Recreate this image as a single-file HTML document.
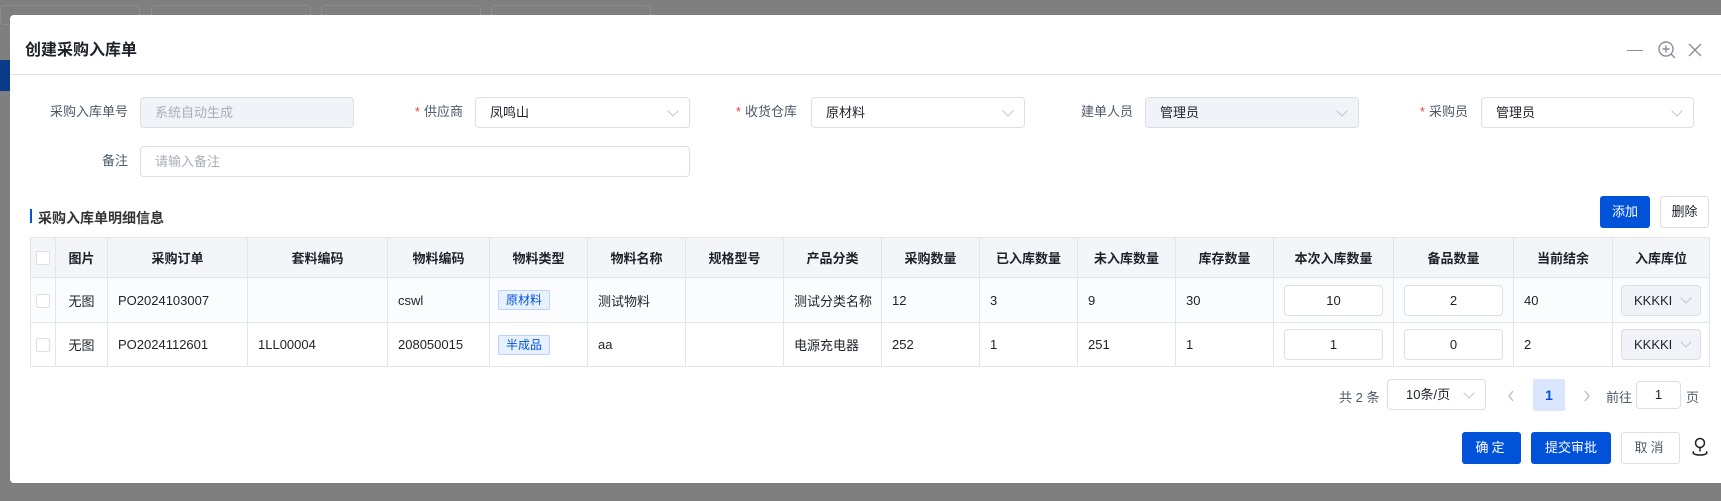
<!DOCTYPE html>
<html><head><meta charset="utf-8"><style>
*{box-sizing:border-box;margin:0;padding:0}
body{width:1721px;height:501px;overflow:hidden;background:#7f7f7f;font-family:"Liberation Sans","Noto Sans CJK SC",sans-serif;position:relative;color:#1d2129}
.a{position:absolute}
.modal{left:10px;top:15px;width:1720px;height:468px;background:#fff;border-radius:4px 0 0 4px}
.lbl{font-size:13px;color:#4e5969;text-align:right;width:120px;line-height:30px}
.req{color:#f53f3f;margin-right:4px}
.inp{height:31px;border:1px solid #dcdfe6;border-radius:4px;font-size:13px;line-height:29px;padding-left:14px;background:#fff;color:#1d2129}
.dis{background:#f2f3f8}
.ph{color:#a9aeb8}
.arr{position:absolute;right:12px;top:9px;width:8px;height:8px;border-right:1px solid #c0c4cc;border-bottom:1px solid #c0c4cc;transform:rotate(45deg)}
table{border-collapse:collapse;table-layout:fixed}
td,th{border:1px solid #e1e5ec;font-size:13px;padding:0 10px;white-space:nowrap;overflow:hidden}
th{height:40px;background:#f3f5f9;font-weight:bold;text-align:center;color:#1d2129}
tr.r1 td{height:45px;background:#fbfcfe}
tr.r2 td{height:44px;background:#fff}
.cb{width:14px;height:14px;border:1px solid #dcdfe6;border-radius:2px;background:#fff;display:inline-block;vertical-align:middle}
.tag{display:inline-block;border:1px solid #bed3fb;background:#e8f1ff;color:#0052d9;font-size:12px;padding:0 7px;line-height:18px;border-radius:2px}
.ci{height:31px;border:1px solid #dcdfe6;border-radius:4px;text-align:center;line-height:29px;background:#fff}
.sel{height:31px;border:1px solid #dcdfe6;border-radius:4px;background:#f2f3f8;line-height:29px;padding-left:12px;position:relative}
.btn{font-size:13px;text-align:center;border-radius:3px}
.pri{background:#0052d9;color:#fff}
.def{border:1px solid #dcdfe6;color:#4e5969;background:#fff}
</style></head><body>
<div class="a" style="left:0;top:5px;width:140px;height:20px;border:1px solid #8c8c8c;border-radius:4px"></div>
<div class="a" style="left:151px;top:5px;width:160px;height:20px;border:1px solid #8c8c8c;border-radius:4px"></div>
<div class="a" style="left:321px;top:5px;width:160px;height:20px;border:1px solid #8c8c8c;border-radius:4px"></div>
<div class="a" style="left:491px;top:5px;width:160px;height:20px;border:1px solid #8c8c8c;border-radius:4px"></div>
<div class="a" style="left:0;top:60px;width:10px;height:31px;background:#0b3a8a"></div>

<div class="a modal"></div>
<div class="a" style="left:25px;top:36px;font-size:16px;font-weight:bold;color:#1d2129">创建采购入库单</div>
<div class="a" style="left:1627px;top:50px;width:16px;height:1px;background:#8a8f99"></div>
<svg class="a" style="left:1657px;top:40px" width="20" height="20" viewBox="0 0 20 20" fill="none" stroke="#8a8f99" stroke-width="1.4"><circle cx="9" cy="9" r="7"/><path d="M9 5.5v7M5.5 9h7M14 14l4 4"/></svg>
<svg class="a" style="left:1688px;top:43px" width="14" height="14" viewBox="0 0 14 14" stroke="#8a8f99" stroke-width="1.4"><path d="M1 1l12 12M13 1L1 13"/></svg>
<div class="a" style="left:10px;top:74px;width:1711px;height:1px;background:#e0e2e7"></div>

<div class="a lbl" style="left:8px;top:97px">采购入库单号</div>
<div class="a inp dis ph" style="left:140px;top:97px;width:214px">系统自动生成</div>
<div class="a lbl" style="left:343px;top:97px"><span class="req">*</span>供应商</div>
<div class="a inp" style="left:475px;top:97px;width:215px">凤鸣山<span class="arr"></span></div>
<div class="a lbl" style="left:677px;top:97px"><span class="req">*</span>收货仓库</div>
<div class="a inp" style="left:811px;top:97px;width:214px">原材料<span class="arr"></span></div>
<div class="a lbl" style="left:1013px;top:97px">建单人员</div>
<div class="a inp dis" style="left:1145px;top:97px;width:214px">管理员<span class="arr"></span></div>
<div class="a lbl" style="left:1348px;top:97px"><span class="req">*</span>采购员</div>
<div class="a inp" style="left:1481px;top:97px;width:213px">管理员<span class="arr"></span></div>
<div class="a lbl" style="left:8px;top:146px">备注</div>
<div class="a inp ph" style="left:140px;top:146px;width:550px">请输入备注</div>

<div class="a" style="left:30px;top:209px;width:2px;height:14px;background:#0052d9"></div>
<div class="a" style="left:38px;top:208px;font-size:14px;font-weight:bold;color:#333">采购入库单明细信息</div>
<div class="a btn pri" style="left:1600px;top:196px;width:50px;height:32px;line-height:32px">添加</div>
<div class="a btn def" style="left:1660px;top:196px;width:49px;height:32px;line-height:30px;color:#1d2129">删除</div>

<table class="a" style="left:30px;top:237px;width:1679px">
<colgroup><col style="width:25px"><col style="width:52px"><col style="width:140px"><col style="width:140px"><col style="width:102px"><col style="width:98px"><col style="width:98px"><col style="width:98px"><col style="width:98px"><col style="width:98px"><col style="width:98px"><col style="width:98px"><col style="width:98px"><col style="width:120px"><col style="width:120px"><col style="width:99px"><col style="width:97px"></colgroup>
<tr><th style="padding:0 5px"><span class="cb"></span></th><th>图片</th><th>采购订单</th><th>套料编码</th><th>物料编码</th><th>物料类型</th><th>物料名称</th><th>规格型号</th><th>产品分类</th><th>采购数量</th><th>已入库数量</th><th>未入库数量</th><th>库存数量</th><th>本次入库数量</th><th>备品数量</th><th>当前结余</th><th>入库库位</th></tr>
<tr class="r1"><td style="padding:0 5px"><span class="cb"></span></td><td style="text-align:center">无图</td><td>PO2024103007</td><td></td><td>cswl</td><td style="padding:0 8px"><span class="tag">原材料</span></td><td>测试物料</td><td></td><td>测试分类名称</td><td>12</td><td>3</td><td>9</td><td>30</td><td><div class="ci">10</div></td><td><div class="ci">2</div></td><td>40</td><td style="padding:0 8px"><div class="sel">KKKKI<span class="arr" style="right:10px;top:8px"></span></div></td></tr>
<tr class="r2"><td style="padding:0 5px"><span class="cb"></span></td><td style="text-align:center">无图</td><td>PO2024112601</td><td>1LL00004</td><td>208050015</td><td style="padding:0 8px"><span class="tag">半成品</span></td><td>aa</td><td></td><td>电源充电器</td><td>252</td><td>1</td><td>251</td><td>1</td><td><div class="ci">1</div></td><td><div class="ci">0</div></td><td>2</td><td style="padding:0 8px"><div class="sel">KKKKI<span class="arr" style="right:10px;top:8px"></span></div></td></tr>
</table>

<div class="a" style="left:1339px;top:387px;font-size:13px;color:#4e5969">共 2 条</div>
<div class="a inp" style="left:1387px;top:379px;width:99px;padding-left:18px">10条/页<span class="arr"></span></div>
<svg class="a" style="left:1507px;top:389px" width="8" height="14" viewBox="0 0 8 14" fill="none" stroke="#c0c4cc" stroke-width="1.5"><path d="M6 2L2 7l4 5"/></svg>
<div class="a" style="left:1533px;top:379px;width:32px;height:32px;background:#d9e6fd;color:#0052d9;font-weight:bold;font-size:14px;text-align:center;line-height:32px;border-radius:2px">1</div>
<svg class="a" style="left:1583px;top:389px" width="8" height="14" viewBox="0 0 8 14" fill="none" stroke="#c0c4cc" stroke-width="1.5"><path d="M2 2l4 5-4 5"/></svg>
<div class="a" style="left:1606px;top:387px;font-size:13px;color:#4e5969">前往</div>
<div class="a inp" style="left:1636px;top:381px;width:45px;height:28px;line-height:26px;padding:0;text-align:center">1</div>
<div class="a" style="left:1686px;top:387px;font-size:13px;color:#4e5969">页</div>

<div class="a btn pri" style="left:1462px;top:432px;width:59px;height:32px;line-height:32px;letter-spacing:3px">确定</div>
<div class="a btn pri" style="left:1531px;top:432px;width:80px;height:32px;line-height:32px">提交审批</div>
<div class="a btn def" style="left:1621px;top:432px;width:59px;height:32px;line-height:30px;letter-spacing:3px">取消</div>
<svg class="a" style="left:1691px;top:437px" width="18" height="20" viewBox="0 0 18 20" fill="none" stroke="#1d2129" stroke-width="1.5"><circle cx="9" cy="6" r="4.5"/><path d="M9 10.5v4M3 14.5c-2 1-1 3.5 6 3.5s8-2.5 6-3.5"/></svg>
</body></html>
